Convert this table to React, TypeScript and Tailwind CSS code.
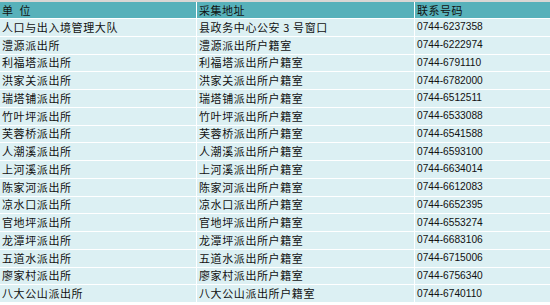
import React from "react";

const rows: [string, string, string][] = [
  ["人口与出入境管理大队", "县政务中心公安 3 号窗口", "0744-6237358"],
  ["澧源派出所", "澧源派出所户籍室", "0744-6222974"],
  ["利福塔派出所", "利福塔派出所户籍室", "0744-6791110"],
  ["洪家关派出所", "洪家关派出所户籍室", "0744-6782000"],
  ["瑞塔铺派出所", "瑞塔铺派出所户籍室", "0744-6512511"],
  ["竹叶坪派出所", "竹叶坪派出所户籍室", "0744-6533088"],
  ["芙蓉桥派出所", "芙蓉桥派出所户籍室", "0744-6541588"],
  ["人潮溪派出所", "人潮溪派出所户籍室", "0744-6593100"],
  ["上河溪派出所", "上河溪派出所户籍室", "0744-6634014"],
  ["陈家河派出所", "陈家河派出所户籍室", "0744-6612083"],
  ["凉水口派出所", "凉水口派出所户籍室", "0744-6652395"],
  ["官地坪派出所", "官地坪派出所户籍室", "0744-6553274"],
  ["龙潭坪派出所", "龙潭坪派出所户籍室", "0744-6683106"],
  ["五道水派出所", "五道水派出所户籍室", "0744-6715006"],
  ["廖家村派出所", "廖家村派出所户籍室", "0744-6756340"],
  ["八大公山派出所", "八大公山派出所户籍室", "0744-6740110"],
];

const font = {
  fontFamily: '"Noto Sans CJK SC", "Noto Sans", sans-serif',
};

export default function App() {
  return (
    <div className="w-[550px] h-[305px] bg-white overflow-hidden" style={font}>
      <div className="h-[2px] bg-[#dad7d4]" />
      <div className="grid grid-cols-[196px_217px_135px] gap-x-[1px] gap-y-[1px] w-[550px] text-[11px] text-[#111] leading-none">
        <div className="h-[16px] bg-[#57b1ba] flex items-center pl-[2px] tracking-[0.5px]">
          单&nbsp;&nbsp;位
        </div>
        <div className="h-[16px] bg-[#57b1ba] flex items-center pl-[2px] tracking-[0.5px]">采集地址</div>
        <div className="h-[16px] bg-[#57b1ba] flex items-center pl-[2px] tracking-[0.5px]">联系号码</div>
        {rows.map((r, i) => (
          <React.Fragment key={i}>
            <div className="h-[16.75px] bg-[#dcf0f3] flex items-center pl-[2px] tracking-[0.6px]">{r[0]}</div>
            <div className="h-[16.75px] bg-[#dcf0f3] flex items-center pl-[2px] tracking-[0.6px]">{r[1]}</div>
            <div
              className="h-[16.75px] bg-[#dcf0f3] flex items-center pl-[2px]"
              style={{ fontFamily: '"Liberation Sans", sans-serif', fontSize: "10.2px" }}
            >
              {r[2]}
            </div>
          </React.Fragment>
        ))}
      </div>
    </div>
  );
}
